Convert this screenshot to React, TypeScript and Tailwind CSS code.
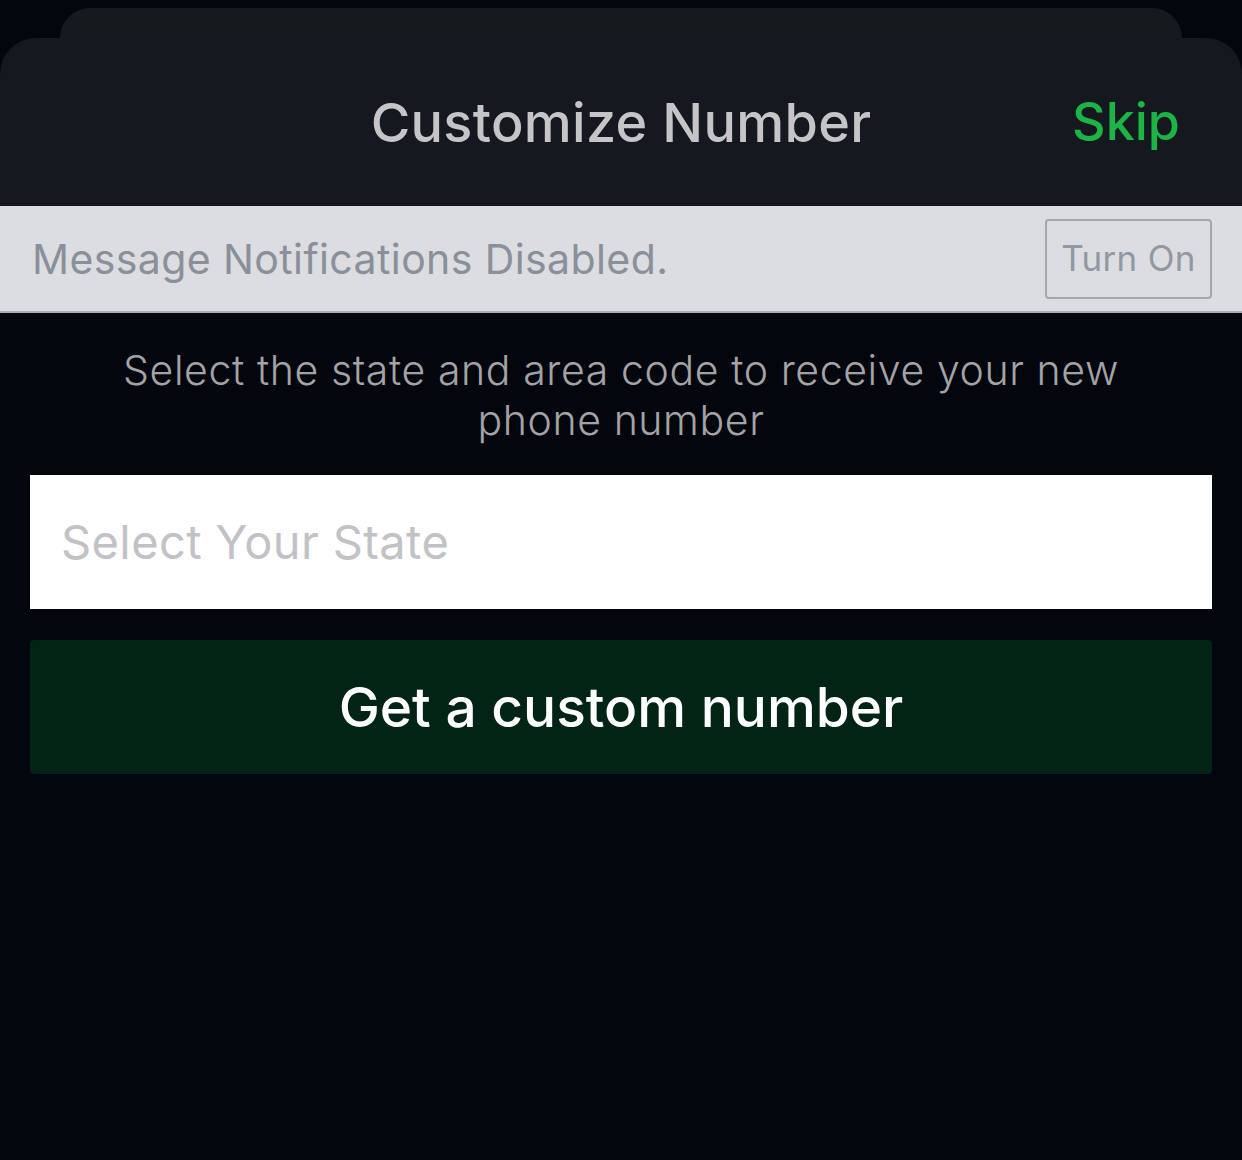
export default function App() {
  return (
    <div className="min-h-[1160px] w-full bg-[#03060d] font-['Inter','Noto_Sans',sans-serif] overflow-hidden">
      {/* stacked sheets */}
      <div className="relative pt-[38px]">
        <div className="absolute top-[8px] left-[60px] right-[60px] h-[80px] rounded-t-[30px] bg-[#16191e]"></div>
        <div className="relative h-[168px] rounded-t-[36px] bg-[#15181e] flex items-center justify-center">
          <h1 className="text-[54px] font-medium text-[#c5c5c7] tracking-[0.3px]">Customize Number</h1>
          <button className="absolute right-[62px] top-[45px] text-[52px] font-medium text-[#1db446]">Skip</button>
        </div>
      </div>

      {/* notifications banner */}
      <div className="h-[107px] bg-[#dcdde0] border-b-2 border-[#a9abb0] flex items-center justify-between pl-[32px] pr-[30px]">
        <span className="text-[41px] tracking-[0.4px] text-[#8a9099] mt-[2px]">Message Notifications Disabled.</span>
        <button className="w-[167px] h-[80px] border-2 border-[#a3a7ad] rounded-[4px] text-[35px] tracking-[0.3px] text-[#9298a0] flex items-center justify-center">
          Turn On
        </button>
      </div>

      <div className="px-[30px]">
        <p className="pt-[32px] text-center text-[41px] tracking-[0.6px] leading-[50px] font-light text-[#a3a3a6] px-[90px]">
          Select the state and area code to receive your new phone number
        </p>

        <div className="mt-[30px] h-[134px] bg-white flex items-center pl-[31px]">
          <span className="text-[47px] tracking-[0.4px] text-[#c2c2c6]">Select Your State</span>
        </div>

        <button className="mt-[31px] w-full h-[134px] bg-[#012415] rounded-[4px] flex items-center justify-center">
          <span className="text-[55px] font-medium text-white">Get a custom number</span>
        </button>
      </div>
    </div>
  );
}
